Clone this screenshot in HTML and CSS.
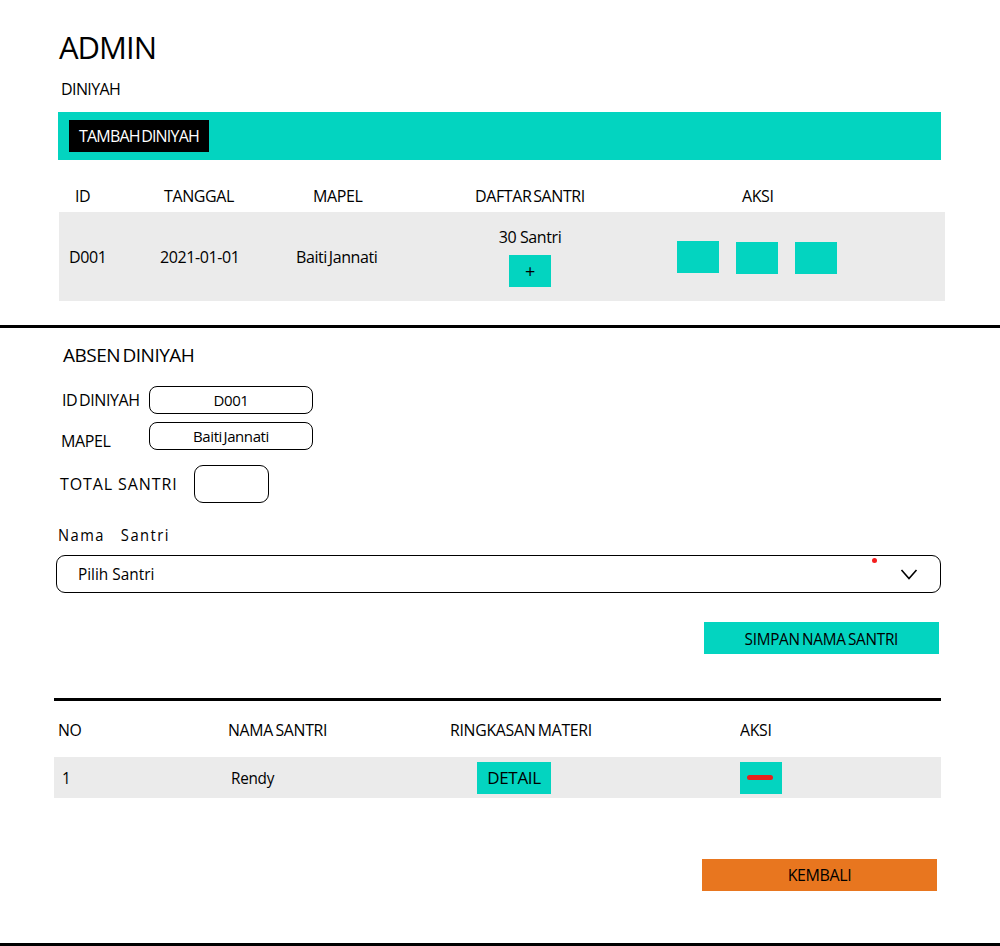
FILE: index.html
```html
<!DOCTYPE html>
<html lang="id">
<head>
<meta charset="utf-8">
<title>Admin Diniyah</title>
<link rel="stylesheet" href="styles.css">
</head>
<body>
<div class="page">
  <section class="top">
    <h1 class="title">ADMIN</h1>
    <div class="subtitle">DINIYAH</div>
    <div class="bar">
      <button class="btn-black">TAMBAH DINIYAH</button>
    </div>

    <div class="t1 t1-head">
      <div class="c h-id">ID</div>
      <div class="c h-tgl">TANGGAL</div>
      <div class="c h-mapel">MAPEL</div>
      <div class="c h-daftar tight">DAFTAR SANTRI</div>
      <div class="c h-aksi">AKSI</div>
    </div>
    <div class="t1 t1-row">
      <div class="c d-id">D001</div>
      <div class="c d-tgl">2021-01-01</div>
      <div class="c d-mapel tight">Baiti Jannati</div>
      <div class="c d-daftar">
        <span>30 Santri</span>
        <button class="btn-teal btn-sq">+</button>
      </div>
      <div class="c d-aksi">
        <span class="btn-teal btn-sq"></span>
        <span class="btn-teal btn-sq low"></span>
        <span class="btn-teal btn-sq low"></span>
      </div>
    </div>
  </section>

  <hr class="rule">

  <section class="form">
    <h2 class="form-title tight">ABSEN DINIYAH</h2>
    <div class="frow r1">
      <span class="flabel tight">ID DINIYAH</span>
      <span class="finput">D001</span>
    </div>
    <div class="frow r2">
      <span class="flabel l2">MAPEL</span>
      <span class="finput tight">Baiti Jannati</span>
    </div>
    <div class="frow r3">
      <span class="flabel l3">TOTAL SANTRI</span>
      <span class="fbox"></span>
    </div>
    <div class="nama"><span class="cond">Nama&nbsp;&nbsp; Santri</span></div>
    <div class="select">
      <span class="cond sel">Pilih Santri</span>
      <span class="dot"></span>
      <svg class="chev" width="18" height="11" viewBox="0 0 18 11"><path d="M1.5 1 L9 9.5 L16.5 1" fill="none" stroke="#000" stroke-width="1.6"/></svg>
    </div>
    <div class="actions">
      <button class="btn-teal btn-wide"><span class="cond2">SIMPAN NAMA SANTRI</span></button>
    </div>

    <hr class="rule short">

    <div class="t2 t2-head">
      <div class="c2 h2-no"><span class="cond2">NO</span></div>
      <div class="c2 h2-nama"><span class="cond2">NAMA SANTRI</span></div>
      <div class="c2 h2-ring"><span class="cond2">RINGKASAN MATERI</span></div>
      <div class="c2 h2-aksi"><span class="cond2">AKSI</span></div>
    </div>
    <div class="t2 t2-row">
      <div class="c2 d2-no"><span class="cond2">1</span></div>
      <div class="c2 d2-nama"><span class="cond2">Rendy</span></div>
      <div class="c2 d2-ring"><button class="btn-teal btn-detail"><span class="cond2">DETAIL</span></button></div>
      <div class="c2 d2-aksi"><span class="btn-teal btn-sq"><span class="dash"></span></span></div>
    </div>

    <div class="actions back">
      <button class="btn-orange btn-wide">KEMBALI</button>
    </div>
  </section>

  <hr class="rule bottom">
</div>
</body>
</html>
```

FILE: styles.css
```css
* { box-sizing: border-box; }
html, body { margin: 0; padding: 0; background: #fff; }
body {
  font-family: "Open Sans", "Noto Sans", "Liberation Sans", sans-serif;
  color: #000;
  font-size: 16px;
  letter-spacing: -0.4px;
}
button {
  font-family: inherit;
  font-size: 16px;
  letter-spacing: inherit;
  border: 0;
  padding: 0;
  color: #000;
  cursor: pointer;
}
.page { width: 1000px; height: 946px; overflow: hidden; }
.tight { word-spacing: -2px; }
.cond { display: inline-block; transform: scaleX(0.92); transform-origin: left center; letter-spacing: 1.6px; }
.cond2 { display: inline-block; transform: scaleX(0.9); transform-origin: left center; letter-spacing: -0.3px; word-spacing: -1.5px; }

/* top */
.top { padding-top: 27px; }
.title { margin: 0 0 0 59px; font-weight: 400; font-size: 31px; line-height: 40px; letter-spacing: -1px; }
.subtitle { margin: 12px 0 0 61px; font-size: 16px; line-height: 20px; letter-spacing: -0.6px; }
.bar {
  margin: 13px 59px 0 58px;
  height: 48px;
  background: #03d4c0;
  display: flex;
  align-items: center;
  padding-left: 11px;
}
.btn-black {
  background: #000;
  color: #fff;
  width: 140px;
  height: 32px;
  font-size: 16px;
  letter-spacing: -0.8px;
  word-spacing: -2px;
}

.t1 {
  margin-left: 59px;
  width: 886px;
  display: grid;
  grid-template-columns: 91px 135px 145px 200px 315px;
  align-items: center;
}
.t1-head { margin-top: 26px; line-height: 20px; height: 26px; align-items: start; }
.t1-row { background: #ebebeb; height: 89px; }
.h-id { padding-left: 16px; }
.h-tgl { padding-left: 14px; }
.h-mapel { padding-left: 28px; }
.h-daftar { padding-left: 45px; }
.h-aksi { padding-left: 112px; }
.d-id { padding-left: 10px; }
.d-tgl { padding-left: 10px; }
.d-mapel { padding-left: 11px; }
.d-daftar {
  display: flex;
  flex-direction: column;
  align-items: center;
  gap: 8px;
  line-height: 20px;
}
.d-aksi { display: flex; gap: 17px; padding-left: 47px; align-items: center; }
.btn-teal { background: #03d4c0; display: inline-flex; align-items: center; justify-content: center; }
.btn-sq { width: 42px; height: 32px; font-size: 18px; }
.low { margin-top: 2px; }

.rule { border: 0; margin: 24px 0 0; height: 3px; background: #000; }

/* form */
.form { padding-top: 15px; }
.form-title { margin: 0 0 0 63px; font-weight: 400; font-size: 19px; line-height: 24px; letter-spacing: -0.5px; }
.frow { display: flex; align-items: center; }
.r1 { margin: 19px 0 0 62px; height: 28px; }
.r2 { margin: 8px 0 0 61px; height: 28px; }
.r3 { margin: 15px 0 0 60px; height: 38px; }
.flabel { width: 87px; font-size: 16px; line-height: 20px; }
.l2 { width: 88px; padding-top: 10px; }
.l3 { width: 134px; letter-spacing: 0.9px; }
.finput {
  width: 164px;
  height: 28px;
  border: 1px solid #000;
  border-radius: 8px;
  display: flex;
  align-items: center;
  justify-content: center;
  font-size: 15px;
}
.fbox { width: 75px; height: 38px; border: 1px solid #000; border-radius: 9px; }
.nama { margin: 22px 0 0 58px; line-height: 20px; font-size: 16px; }
.select {
  position: relative;
  margin: 10px 0 0 56px;
  width: 885px;
  height: 38px;
  border: 1px solid #000;
  border-radius: 9px;
  display: flex;
  align-items: center;
  padding-left: 21px;
  font-size: 16px;
}
.select .sel { letter-spacing: 0; transform: scaleX(0.96); }
.chev { position: absolute; left: 843px; top: 13px; }
.dot { position: absolute; left: 815px; top: 2px; width: 5px; height: 5px; border-radius: 50%; background: #f41e1e; }
.actions { display: flex; justify-content: flex-end; margin: 29px 61px 0 0; }
.btn-wide { width: 235px; height: 32px; font-size: 16px; }
.btn-wide .cond2 { transform-origin: center; transform: scaleX(0.9); font-size: 17px; }
.rule.short { margin: 44px 59px 0 54px; }

.t2 {
  margin-left: 54px;
  width: 887px;
  display: grid;
  grid-template-columns: 166px 220px 290px 211px;
  align-items: center;
}
.t2-head { margin-top: 19px; line-height: 20px; height: 37px; align-items: start; font-size: 17px; }
.t2-head .cond2 { transform: scaleX(0.93); }
.t2-row { background: #ebebeb; height: 41px; font-size: 17px; }
.h2-no { padding-left: 4px; }
.h2-nama { padding-left: 8px; }
.h2-ring { padding-left: 10px; }
.h2-aksi { padding-left: 10px; }
.d2-no { padding-left: 8px; }
.d2-nama { padding-left: 11px; }
.d2-ring { padding-left: 37px; }
.d2-aksi { padding-left: 10px; display: flex; }
.btn-detail { width: 74px; height: 32px; font-size: 17px; }
.btn-detail .cond2 { transform-origin: center; transform: scaleX(1); }
.dash { width: 26px; height: 5px; border-radius: 3px; background: #e8201c; margin-right: 3px; }
.back { margin-top: 61px; margin-right: 63px; }
.btn-orange { background: #e8761f; font-size: 16px; }
.rule.bottom { margin: 52px 0 0; }
```
